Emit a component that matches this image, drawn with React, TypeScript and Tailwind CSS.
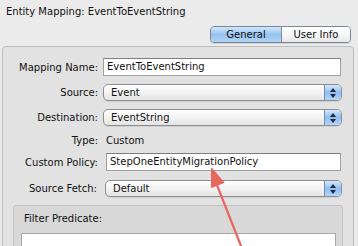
import React from "react";

function Popup({ value }: { value: string }) {
  return (
    <div className="flex h-[17px] w-full items-stretch rounded-[5px] border border-[#8e8e8e] bg-gradient-to-b from-[#ffffff] via-[#f3f3f3] to-[#e4e4e4] shadow-[0_1px_0_rgba(0,0,0,0.08)]">
      <div className="flex flex-1 items-center pl-[7px] leading-none">{value}</div>
      <div className="flex w-[17px] flex-col items-center justify-center gap-[2px] rounded-r-[4px] border-l border-[#6f8fb8] bg-gradient-to-b from-[#d6e8fb] via-[#8fbdf0] to-[#b6d6f7]">
        <svg width="6" height="4" viewBox="0 0 6 4"><path d="M3 0 L6 4 L0 4 Z" fill="#1c2a3c" /></svg>
        <svg width="6" height="4" viewBox="0 0 6 4"><path d="M0 0 L6 0 L3 4 Z" fill="#1c2a3c" /></svg>
      </div>
    </div>
  );
}

function TextField({ value }: { value: string }) {
  return (
    <div className="flex h-[18px] w-full items-center border border-[#a0a0a0] border-t-[#7d7d7d] bg-white pl-[3px] leading-none">
      {value}
    </div>
  );
}

export default function App() {
  return (
    <div
      className="relative h-[246px] w-[358px] overflow-hidden bg-[#ebebeb] text-[10px] text-[#111]"
      style={{ fontFamily: '"DejaVu Sans", "Open Sans", sans-serif' }}
    >
      <div className="h-[22px] pl-[6px] pt-[5px] leading-[14px]">Entity Mapping: EventToEventString</div>

      <div className="mt-[4px] flex justify-end pr-[7px]">
        <div className="flex h-[17px] overflow-hidden rounded-[4px] border border-[#7a8799] shadow-[0_1px_0_rgba(0,0,0,0.1)]">
          <div className="flex w-[70px] items-center justify-center bg-gradient-to-b from-[#d3e7fb] via-[#96c3ef] to-[#b0d3f5] leading-none">General</div>
          <div className="flex w-[69px] items-center justify-center border-l border-[#8a8a8a] bg-gradient-to-b from-[#ffffff] via-[#f6f6f6] to-[#e8e8e8] leading-none">User Info</div>
        </div>
      </div>

      <div className="mt-[3px] ml-[2px] mr-[4px] h-[220px] rounded-[4px] border border-[#bdbdbd] bg-[#e2e2e2]">
        <div className="mt-[11px] flex h-[18px] items-center">
          <div className="w-[95px] text-right">Mapping Name:</div>
          <div className="ml-[5px] w-[238px]"><TextField value="EventToEventString" /></div>
        </div>

        <div className="mt-[8px] flex h-[17px] items-center">
          <div className="w-[95px] text-right">Source:</div>
          <div className="ml-[5px] w-[239px]"><Popup value="Event" /></div>
        </div>

        <div className="mt-[8px] flex h-[17px] items-center">
          <div className="w-[95px] text-right">Destination:</div>
          <div className="ml-[5px] w-[239px]"><Popup value="EventString" /></div>
        </div>

        <div className="mt-[6px] flex h-[16px] items-center">
          <div className="w-[95px] text-right">Type:</div>
          <div className="ml-[8px]">Custom</div>
        </div>

        <div className="mt-[5px] flex h-[18px] items-center">
          <div className="w-[95px] text-right">Custom Policy:</div>
          <div className="ml-[8px] w-[235px]"><TextField value="StepOneEntityMigrationPolicy" /></div>
        </div>

        <div className="mt-[9px] flex h-[17px] items-center">
          <div className="w-[94px] text-right">Source Fetch:</div>
          <div className="ml-[8px] w-[237px]"><Popup value="Default" /></div>
        </div>

        <div className="mt-[8px] ml-[10px] h-[60px] w-[330px] rounded-[3px] border border-[#c2c2c2] bg-[#d8d8d8]">
          <div className="pl-[10px] pt-[7px] leading-[12px]">Filter Predicate:</div>
          <div className="mt-[8px] ml-[7px] h-[40px] w-[315px] border border-[#a8a8a8] bg-white" />
        </div>
      </div>

      <svg className="pointer-events-none absolute left-0 top-0" width="358" height="246" viewBox="0 0 358 246">
        <line x1="241" y1="246" x2="215" y2="180" stroke="#e8665b" strokeWidth="2.2" strokeLinecap="round" />
        <path d="M211.5 168 L224 182.5 L211.5 187.5 Z" fill="#e8665b" stroke="#e8665b" strokeWidth="1" strokeLinejoin="round" />
      </svg>
    </div>
  );
}
